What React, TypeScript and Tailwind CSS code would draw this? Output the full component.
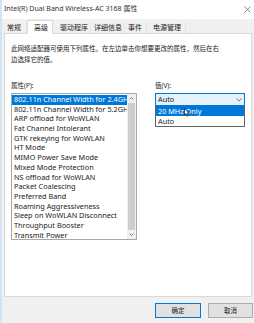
import React from "react";

const items = [
  "802.11n Channel Width for 2.4GHz",
  "802.11n Channel Width for 5.2GHz",
  "ARP offload for WoWLAN",
  "Fat Channel Intolerant",
  "GTK rekeying for WoWLAN",
  "HT Mode",
  "MIMO Power Save Mode",
  "Mixed Mode Protection",
  "NS offload for WoWLAN",
  "Packet Coalescing",
  "Preferred Band",
  "Roaming Aggressiveness",
  "Sleep on WoWLAN Disconnect",
  "Throughput Booster",
  "Transmit Power",
];

const tabs = [
  { t: "常规", c: "w-[25px] pl-[5px]" },
  { t: "高级", c: "w-[26px] pl-[6px]" },
  { t: "驱动程序", c: "w-[38px] pl-[7px]" },
  { t: "详细信息", c: "w-[34px] pl-[3px]" },
  { t: "事件", c: "w-[22px] pl-[3px]" },
  { t: "电源管理", c: "w-[39px] pl-[6px]" },
];

export default function App() {
  return (
    <div
      className="w-[254px] h-[323px] overflow-hidden bg-[#f0f0f0] text-[#1a1a1a] flex flex-col border-l-2 border-[#d3e5f5]"
      style={{ fontFamily: '"Noto Sans", "Noto Sans CJK SC", sans-serif' }}
    >
      <div className="h-[19px] bg-white flex items-center justify-between pl-[2px] pr-[3px] text-[7px] text-[#333]">
        <span>Intel(R) Dual Band Wireless-AC 3168 属性</span>
        <svg width="7" height="7" viewBox="0 0 7 7">
          <path d="M0.5 0.5 L6.5 6.5 M6.5 0.5 L0.5 6.5" stroke="#555" strokeWidth="0.7" />
        </svg>
      </div>
      <div className="flex items-end h-[14px] text-[7px] leading-none">
        {tabs.map((tab, i) => (
          <div
            key={tab.t}
            className={
              tab.c +
              " " +
              (i === 1
                ? "h-[14px] flex items-center bg-white border-x border-t border-[#d9d9d9] relative -mb-px z-10"
                : "h-[11px] flex items-center border-r border-[#e3e3e3]")
            }
          >
            {tab.t}
          </div>
        ))}
      </div>
      <div className="mx-[2px] h-[264px] bg-white border border-[#d9d9d9] flex flex-col px-[6px] pt-[9px]">
        <div className="text-[6.5px] leading-[11px] w-[212px]">
          此网络适配器可使用下列属性。在左边单击你想要更改的属性，然后在右边选择它的值。
        </div>
        <div className="flex mt-[15px] gap-[18px]">
          <div className="flex flex-col w-[126px]">
            <div className="text-[6.5px] h-[11px] leading-[11px] mb-[2px]">属性(P):</div>
            <div className="h-[147px] border border-[#a8a8a8] flex">
              <div className="flex-1 flex flex-col pt-px overflow-hidden">
                {items.map((it, i) => (
                  <div
                    key={it}
                    className={
                      "h-[9.7px] leading-[9.7px] text-[7.3px] whitespace-nowrap pl-[2px] " +
                      (i === 0 ? "bg-[#0078d7] text-white" : "")
                    }
                  >
                    {it}
                  </div>
                ))}
              </div>
              <div className="w-[9px] bg-[#f0f0f0] flex flex-col items-center">
                <div className="h-[9px] flex items-center justify-center">
                  <svg width="5" height="3" viewBox="0 0 5 3">
                    <path d="M0.5 2.5 L2.5 0.5 L4.5 2.5" stroke="#606060" fill="none" strokeWidth="0.8" />
                  </svg>
                </div>
                <div className="w-[7px] flex-1 bg-[#cdcdcd]" />
                <div className="h-[9px] flex items-center justify-center">
                  <svg width="5" height="3" viewBox="0 0 5 3">
                    <path d="M0.5 0.5 L2.5 2.5 L4.5 0.5" stroke="#606060" fill="none" strokeWidth="0.8" />
                  </svg>
                </div>
              </div>
            </div>
          </div>
          <div className="flex flex-col w-[92px] relative">
            <div className="text-[6.5px] h-[11px] leading-[11px] mb-[2px]">值(V):</div>
            <div className="h-[13px] border border-[#0078d7] flex items-center justify-between px-[2px] text-[7.3px] bg-[#e5f1fb]">
              <span>Auto</span>
              <svg width="6" height="4" viewBox="0 0 6 4">
                <path d="M0.5 0.5 L3 3 L5.5 0.5" stroke="#606060" fill="none" strokeWidth="0.8" />
              </svg>
            </div>
            <div className="border border-[#646464] border-t-0 bg-white text-[7.3px]">
              <div className="h-[10px] leading-[10px] px-[2px] bg-[#0078d7] text-white relative">
                20 MHz Only
                <svg className="absolute left-[28px] top-[2px]" width="6" height="9" viewBox="0 0 6 9">
                  <path d="M0.5 0.5 L0.5 7 L2 5.6 L3.2 8.3 L4.1 7.9 L3 5.3 L5 5.3 Z" fill="white" stroke="black" strokeWidth="0.6" />
                </svg>
              </div>
              <div className="h-[10px] leading-[10px] px-[2px]">Auto</div>
            </div>
          </div>
        </div>
      </div>
      <div className="flex justify-end gap-[7px] pr-[1px] mt-[6px]">
        <div className="w-[46px] h-[15px] bg-[#e1e1e1] border border-[#0078d7] flex items-center justify-center text-[6.5px]">
          确定
        </div>
        <div className="w-[45px] h-[15px] bg-[#e1e1e1] border border-[#adadad] flex items-center justify-center text-[6.5px]">
          取消
        </div>
      </div>
    </div>
  );
}
